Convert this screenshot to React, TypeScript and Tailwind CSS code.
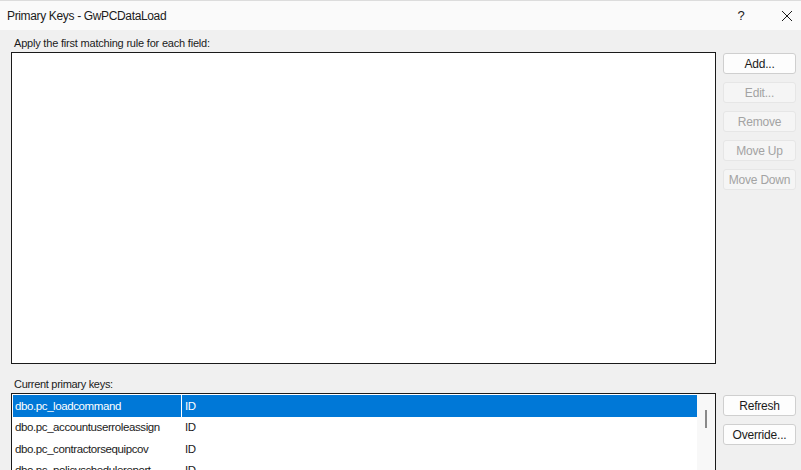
import React from 'react';

const rows = [
  { table: 'dbo.pc_loadcommand', key: 'ID' },
  { table: 'dbo.pc_accountuserroleassign', key: 'ID' },
  { table: 'dbo.pc_contractorsequipcov', key: 'ID' },
  { table: 'dbo.pc_policyschedulereport', key: 'ID' },
];

const ruleButtons = [
  { label: 'Add...', enabled: true },
  { label: 'Edit...', enabled: false },
  { label: 'Remove', enabled: false },
  { label: 'Move Up', enabled: false },
  { label: 'Move Down', enabled: false },
];

function DialogButton({ label, enabled = true }: { label: string; enabled?: boolean }) {
  return (
    <button
      className={
        enabled
          ? 'w-[73px] h-[21px] rounded-[3px] border border-[#cfcfcf] bg-[#fdfdfd] text-[12px] tracking-[-0.2px] text-[#1b1b1b] flex items-center justify-center'
          : 'w-[73px] h-[21px] rounded-[3px] border border-[#e6e6e6] bg-[#f5f5f5] text-[12px] tracking-[-0.2px] text-[#a3a3a3] flex items-center justify-center'
      }
    >
      {label}
    </button>
  );
}

export default function App() {
  return (
    <div
      className="w-[801px] h-[470px] overflow-hidden bg-[#f0f0f0] text-[#1b1b1b]"
      style={{ fontFamily: '"Liberation Sans", Arial, sans-serif' }}
    >
      {/* Title bar */}
      <div className="h-[30px] bg-[#fafafa] border-t border-[#dcdcdc] flex items-center">
        <div className="pl-[7px] text-[12px] tracking-[-0.35px] flex-1">Primary Keys - GwPCDataLoad</div>
        <div className="w-[30px] text-center text-[13px] mr-[16px]">?</div>
        <div className="w-[30px] flex items-center justify-center mr-[-1px]">
          <svg width="12" height="12" viewBox="0 0 12 12" fill="none" stroke="#1b1b1b" strokeWidth="1">
            <path d="M1 1 L11 11 M11 1 L1 11" />
          </svg>
        </div>
      </div>

      <div className="pl-[11px]">
        {/* Rules section */}
        <div className="text-[11px] tracking-[-0.2px] pl-[3px] mt-[6px] h-[14px] leading-[14px]">
          Apply the first matching rule for each field:
        </div>
        <div className="flex mt-[2px]">
          <div className="w-[705px] h-[312px] border border-[#1a1a1a] bg-white" />
          <div className="ml-[7px] mt-[1px] flex flex-col gap-[8px]">
            {ruleButtons.map((b) => (
              <DialogButton key={b.label} label={b.label} enabled={b.enabled} />
            ))}
          </div>
        </div>

        {/* Current keys section */}
        <div className="text-[11px] tracking-[-0.3px] pl-[3px] mt-[13px] h-[14px] leading-[14px]">
          Current primary keys:
        </div>
        <div className="flex mt-[2px]">
          <div className="w-[705px] h-[100px] border border-[#1a1a1a] bg-white flex">
            <div className="flex-1 pl-[1px] pt-[1px]">
              {rows.map((r, i) => (
                <div
                  key={r.table}
                  className={
                    i === 0
                      ? 'h-[21.5px] flex items-center bg-[#0078d7] text-white text-[11.5px] tracking-[-0.4px]'
                      : 'h-[21.5px] flex items-center text-[11.5px] tracking-[-0.4px]'
                  }
                >
                  <div className="w-[168px] pl-[2px] pt-[1px] h-full flex items-center overflow-hidden whitespace-nowrap">
                    {r.table}
                  </div>
                  <div className={i === 0 ? 'w-px h-full bg-white' : 'w-px h-full'} />
                  <div className="pl-[3px] pt-[1px]">{r.key}</div>
                </div>
              ))}
            </div>
            <div className="w-[18px] bg-[#f8f8f8] relative">
              <div className="absolute left-[8px] top-[16px] w-[2px] h-[18px] bg-[#8a8a8a]" />
            </div>
          </div>
          <div className="ml-[7px] mt-[2px] flex flex-col gap-[8px]">
            <DialogButton label="Refresh" />
            <DialogButton label="Override..." />
          </div>
        </div>
      </div>
    </div>
  );
}
